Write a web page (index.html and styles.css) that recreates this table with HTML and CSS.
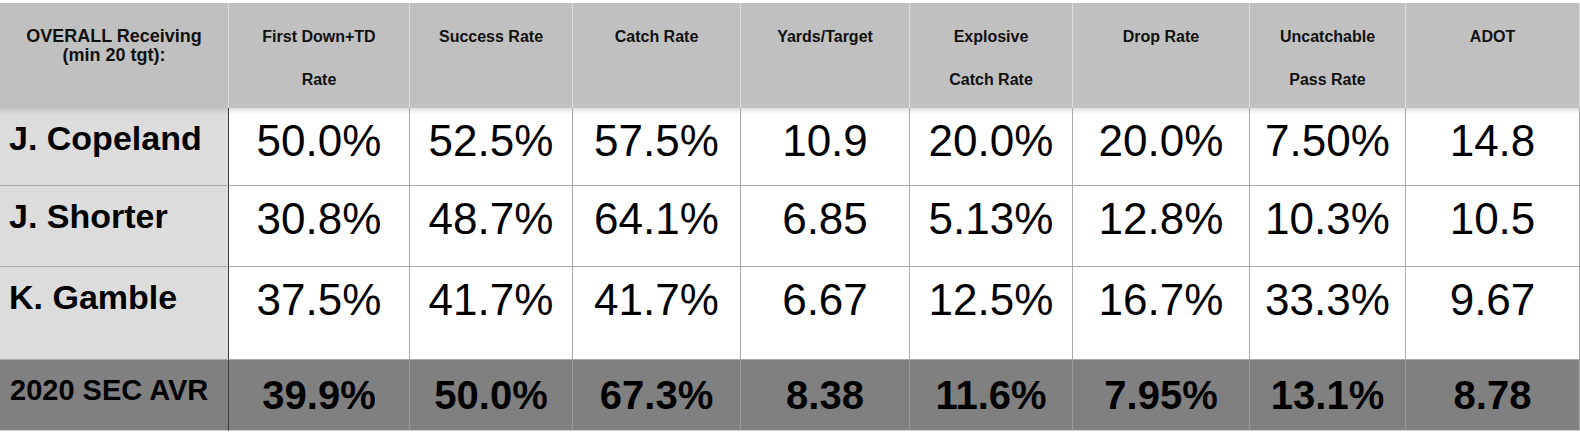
FILE: index.html
```html
<!DOCTYPE html>
<html>
<head>
<meta charset="utf-8">
<link rel="stylesheet" href="styles.css">
</head>
<body>
<div class="table">
  <div class="cell head first-head">OVERALL Receiving<br>(min 20 tgt):</div>
  <div class="cell head">First Down+TD<br>Rate</div>
  <div class="cell head">Success Rate</div>
  <div class="cell head">Catch Rate</div>
  <div class="cell head">Yards/Target</div>
  <div class="cell head">Explosive<br>Catch Rate</div>
  <div class="cell head">Drop Rate</div>
  <div class="cell head">Uncatchable<br>Pass Rate</div>
  <div class="cell head">ADOT</div>

  <div class="cell name top">J. Copeland</div>
  <div class="cell val top">50.0%</div>
  <div class="cell val top">52.5%</div>
  <div class="cell val top">57.5%</div>
  <div class="cell val top">10.9</div>
  <div class="cell val top">20.0%</div>
  <div class="cell val top">20.0%</div>
  <div class="cell val top">7.50%</div>
  <div class="cell val top">14.8</div>

  <div class="cell name">J. Shorter</div>
  <div class="cell val">30.8%</div>
  <div class="cell val">48.7%</div>
  <div class="cell val">64.1%</div>
  <div class="cell val">6.85</div>
  <div class="cell val">5.13%</div>
  <div class="cell val">12.8%</div>
  <div class="cell val">10.3%</div>
  <div class="cell val">10.5</div>

  <div class="cell name">K. Gamble</div>
  <div class="cell val">37.5%</div>
  <div class="cell val">41.7%</div>
  <div class="cell val">41.7%</div>
  <div class="cell val">6.67</div>
  <div class="cell val">12.5%</div>
  <div class="cell val">16.7%</div>
  <div class="cell val">33.3%</div>
  <div class="cell val">9.67</div>

  <div class="cell foot foot-name">2020 SEC AVR</div>
  <div class="cell foot foot-val">39.9%</div>
  <div class="cell foot foot-val">50.0%</div>
  <div class="cell foot foot-val">67.3%</div>
  <div class="cell foot foot-val">8.38</div>
  <div class="cell foot foot-val">11.6%</div>
  <div class="cell foot foot-val">7.95%</div>
  <div class="cell foot foot-val">13.1%</div>
  <div class="cell foot foot-val">8.78</div>
</div>
</body>
</html>
```

FILE: styles.css
```css
html, body {
  margin: 0;
  padding: 0;
  background: #ffffff;
}
body {
  padding-top: 3px;
  font-family: "Liberation Sans", Arial, Helvetica, sans-serif;
  color: #000;
}
.table {
  display: grid;
  grid-template-columns: 229px 181px 163px 168px 169px 163px 177px 156px 174px;
  grid-template-rows: 105px 78px 81px 93px 71px;
  width: 1580px;
}
.cell {
  box-sizing: border-box;
  border-right: 1px solid #a9a9a9;
  border-bottom: 1px solid #a9a9a9;
  text-align: center;
  overflow: hidden;
  white-space: nowrap;
}
.head {
  background: #c0c0c0;
  border-right: 1px solid #dcdcdc;
  border-bottom: none;
  font-weight: bold;
  font-size: 16px;
  line-height: 43px;
  padding-top: 12px;
  color: #111;
}
.first-head {
  font-size: 18px;
  line-height: 19px;
  padding-top: 24px;
}
.head:last-child {
  border-right-color: #a9a9a9;
}
.name {
  background: #dcdcdc;
  border-right: 1px solid #3c3c3c;
  text-align: left;
  font-weight: bold;
  font-size: 34px;
  line-height: 39px;
  padding-top: 11px;
  padding-left: 9px;
}
.val {
  background: #ffffff;
  font-size: 44px;
  line-height: 50px;
  padding-top: 8px;
}
.top.val {
  background: linear-gradient(#dedede 0px, #ffffff 6px);
}
.top.name {
  background: linear-gradient(#c4c4c4 0px, #dcdcdc 6px);
}
.foot {
  background: #808080;
  border-right: 1px solid #9a9a9a;
  border-bottom: 1px solid #d0d0d0;
  font-weight: bold;
}
.foot-name {
  border-right: 1px solid #3c3c3c;
  text-align: left;
  font-size: 29px;
  line-height: 33px;
  padding-top: 14px;
  padding-left: 10px;
}
.foot-val {
  font-size: 40px;
  line-height: 46px;
  padding-top: 12px;
}
.foot-val:last-child {
  border-right-color: #a9a9a9;
}
```
